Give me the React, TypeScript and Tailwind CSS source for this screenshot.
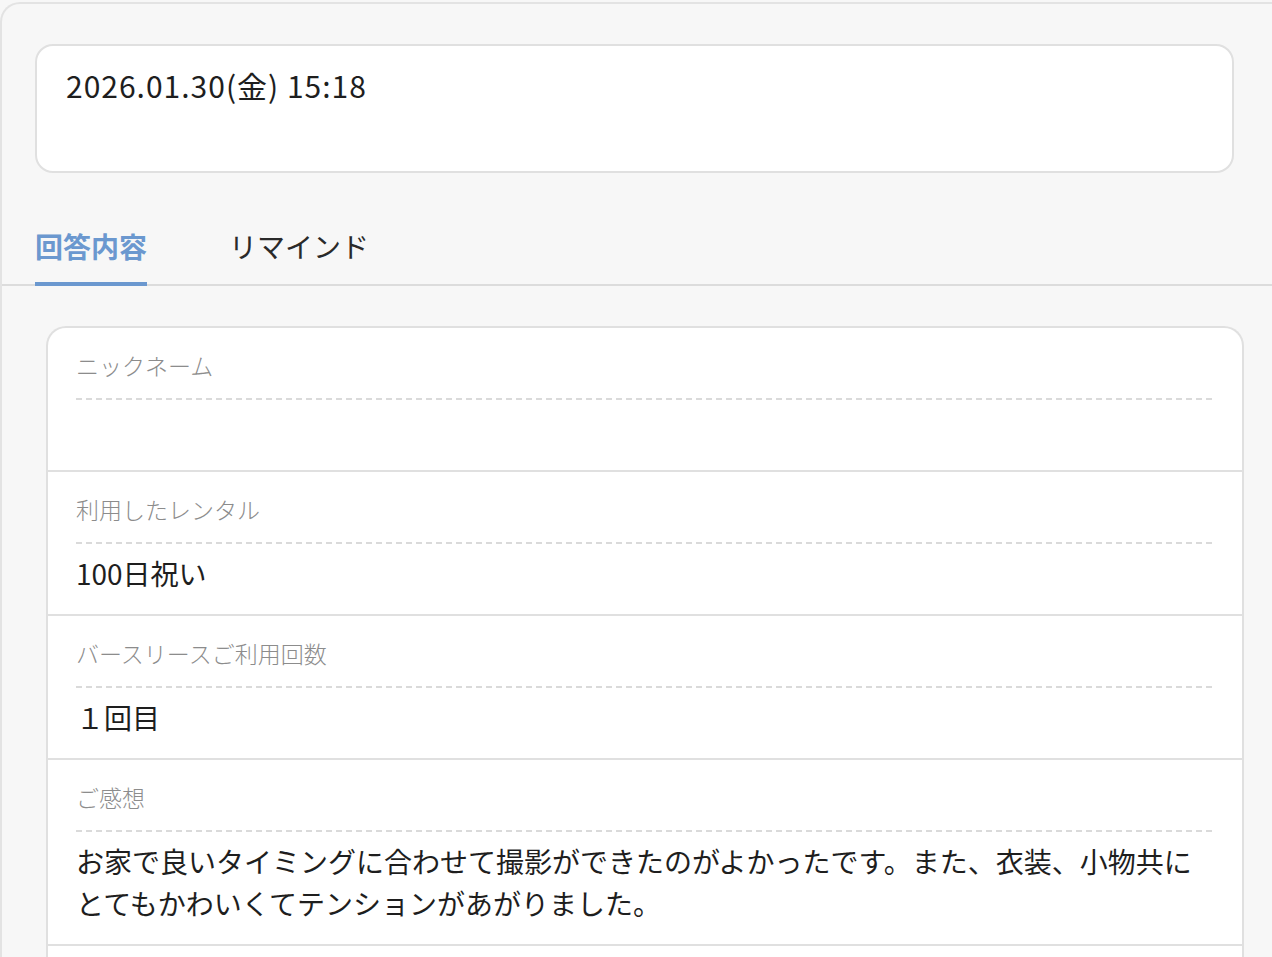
import React from "react";

const font = {
  fontFamily: '"Noto Sans CJK JP", "Noto Sans", sans-serif',
};

function Row({
  label,
  children,
}: {
  label: string;
  children?: React.ReactNode;
}) {
  return (
    <div className="border-b-2 border-[#e0e0e0] px-[28px] pt-[22px] pb-[20px]">
      <div className="text-[23px] leading-[30px] font-light text-[#8c8c8c] pb-[18px]">
        {label}
      </div>
      <div className="h-[2px] bg-[linear-gradient(to_right,#dadada_6px,transparent_6px)] bg-[length:10px_2px] bg-repeat-x" />
      <div className="pt-[8px] text-[28px] leading-[42px] text-[#1e1e1e] min-h-[50px]">
        {children}
      </div>
    </div>
  );
}

export default function App() {
  return (
    <div className="min-h-screen bg-[#f7f7f7] pt-[2px] overflow-hidden" style={font}>
      <div className="border-t-2 border-l-2 border-[#e3e3e3] rounded-tl-[20px] min-h-[955px]">
        <div className="pt-[40px] pl-[33px] pr-[38px]">
          <div className="h-[129px] bg-white border-2 border-[#e0e0e0] rounded-[18px] pl-[29px] pt-[19px]">
            <div className="text-[30px] leading-[40px] text-[#1e1e1e] tracking-[1px]">
              2026.01.30(金) 15:18
            </div>
          </div>
        </div>

        <div className="mt-[53px] border-b-2 border-[#dcdcdc] flex pl-[33px] gap-[82px]">
          <div className="text-[28px] leading-[40px] font-bold text-[#6b98cf] pb-[16px] border-b-4 border-[#6b98cf] -mb-[2px]">
            回答内容
          </div>
          <div className="text-[28px] leading-[40px] text-[#2a2a2a] pb-[16px]">
            リマインド
          </div>
        </div>

        <div className="mt-[40px] ml-[44px] mr-[28px] bg-white border-2 border-b-0 border-[#e0e0e0] rounded-t-[20px]">
          <Row label="ニックネーム" />
          <Row label="利用したレンタル">100日祝い</Row>
          <Row label="バースリースご利用回数">１回目</Row>
          <Row label="ご感想">
            お家で良いタイミングに合わせて撮影ができたのがよかったです。また、衣装、小物共に
            <br />
            とてもかわいくてテンションがあがりました。
          </Row>
          <div className="h-[120px]" />
        </div>
      </div>
    </div>
  );
}
